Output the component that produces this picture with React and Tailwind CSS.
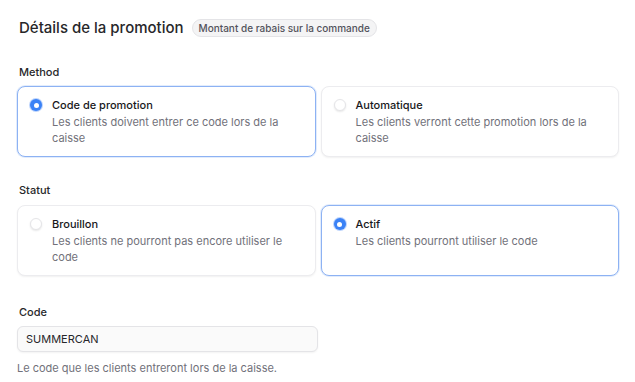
import React, { useState } from 'react';

const methods = [
  { id: 'code', title: 'Code de promotion', desc: 'Les clients doivent entrer ce code lors de la caisse' },
  { id: 'auto', title: 'Automatique', desc: 'Les clients verront cette promotion lors de la caisse' },
];

const statuses = [
  { id: 'draft', title: 'Brouillon', desc: 'Les clients ne pourront pas encore utiliser le code' },
  { id: 'active', title: 'Actif', desc: 'Les clients pourront utiliser le code' },
];

function RadioCard({ item, checked, onSelect }) {
  return (
    <button
      type="button"
      onClick={() => onSelect(item.id)}
      className={`flex items-start gap-[10px] rounded-lg bg-white pl-3 pr-6 pt-[10px] pb-[10px] text-left ${
        checked
          ? 'border border-[#8db2f3] shadow-[0_0_0_1px_rgba(141,178,243,0.25)]'
          : 'border border-[#ececef] shadow-[0_1px_2px_rgba(0,0,0,0.06)]'
      }`}
    >
      <span className="flex h-4 items-center">
        {checked ? (
          <span className="flex h-3 w-3 items-center justify-center rounded-full bg-[#3b82f6] shadow-[0_0_0_1px_rgba(59,130,246,0.35)]">
            <span className="h-[5px] w-[5px] rounded-full bg-white" />
          </span>
        ) : (
          <span className="h-3 w-3 rounded-full border border-[#e5e5e8] bg-white shadow-[0_1px_2px_rgba(0,0,0,0.1)]" />
        )}
      </span>
      <span className="flex flex-col">
        <span className="text-[11px] leading-4 font-medium text-[#18181b]">{item.title}</span>
        <span className="mt-[1px] text-[11px] leading-4 text-[#71717a]">{item.desc}</span>
      </span>
    </button>
  );
}

export default function App() {
  const [method, setMethod] = useState('code');
  const [status, setStatus] = useState('active');

  return (
    <div className="min-h-screen bg-white pl-[17px] pr-[16px] pt-[18px] font-['Inter',sans-serif] text-[#18181b]">
      <div className="flex items-center gap-[8px] pl-[2px]">
        <h1 className="text-[15px] leading-5 font-medium text-[#27272a]">Détails de la promotion</h1>
        <span className="rounded-full border border-[#e4e4e7] bg-[#f4f4f5] px-[6px] py-[2px] text-[10px] leading-[12px] font-medium text-[#52525b]">
          Montant de rabais sur la commande
        </span>
      </div>

      <div className="mt-[26px]">
        <div className="pl-[2px] text-[11px] leading-4 font-medium text-[#27272a]">Method</div>
        <div className="mt-[6px] grid grid-cols-2 gap-[5px]">
          {methods.map((m) => (
            <RadioCard key={m.id} item={m} checked={method === m.id} onSelect={setMethod} />
          ))}
        </div>
      </div>

      <div className="mt-[25px]">
        <div className="pl-[2px] text-[11px] leading-4 font-medium text-[#27272a]">Statut</div>
        <div className="mt-[7px] grid grid-cols-2 gap-[5px]">
          {statuses.map((s) => (
            <RadioCard key={s.id} item={s} checked={status === s.id} onSelect={setStatus} />
          ))}
        </div>
      </div>

      <div className="mt-[28px]">
        <div className="pl-[2px] text-[11px] leading-4 font-medium text-[#27272a]">Code</div>
        <input
          defaultValue="SUMMERCAN"
          className="mt-[6px] block h-[26px] w-[301px] rounded-md border border-[#e4e4e7] bg-[#fafafa] px-2 text-[11px] text-[#27272a] shadow-[0_1px_2px_rgba(0,0,0,0.05)] outline-none"
        />
        <p className="mt-[8px] text-[11px] leading-4 text-[#71717a]">Le code que les clients entreront lors de la caisse.</p>
      </div>
    </div>
  );
}
